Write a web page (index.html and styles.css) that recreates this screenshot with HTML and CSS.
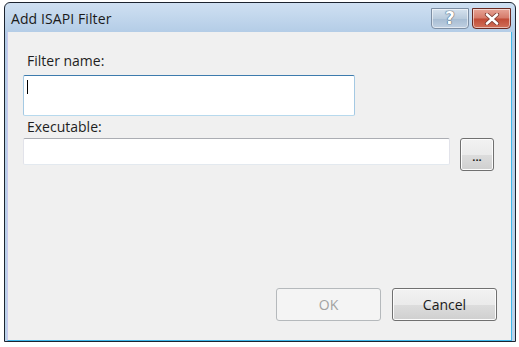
FILE: index.html
```html
<!DOCTYPE html>
<html lang="en">
<head>
    <meta charset="UTF-8">
    <title>Add ISAPI Filter</title>
    <link rel="stylesheet" href="styles.css">
</head>
<body>
    <div class="window">
        <div class="titlebar">
            <span class="title">Add ISAPI Filter</span>
            <div class="caption-buttons">
                <div class="cap-btn help">?</div>
                <div class="cap-btn close">
                    <svg width="16" height="12" viewBox="0 0 16 12">
                        <path d="M3 1.5 L13 10.5 M13 1.5 L3 10.5" stroke="#7a3a30" stroke-width="4.2" stroke-linecap="round"/>
                        <path d="M3 1.5 L13 10.5 M13 1.5 L3 10.5" stroke="#ffffff" stroke-width="2.6" stroke-linecap="round"/>
                    </svg>
                </div>
            </div>
        </div>
        <div class="content">
            <label class="field-label">Filter name:</label>
            <div class="textbox focused name-box"><span class="caret"></span></div>
            <label class="field-label exec-label">Executable:</label>
            <div class="exec-row">
                <div class="textbox exec-box"></div>
                <button class="button browse">...</button>
            </div>
            <div class="actions">
                <button class="button ok" disabled>OK</button>
                <button class="button cancel">Cancel</button>
            </div>
        </div>
    </div>
</body>
</html>
```

FILE: styles.css
```css
body {
    margin: 0;
    background-color: #ffffff;
    font-family: 'Open Sans', 'Noto Sans', sans-serif;
    font-size: 14px;
    color: #000;
}

.window {
    width: 512px;
    height: 340px;
    margin: 2px 0 0 4px;
    box-sizing: border-box;
    border: 1px solid #1c2430;
    border-radius: 6px 6px 0 0;
    background: linear-gradient(#cfe0f2, #b3cce6 30px, #bcd3ea);
    display: flex;
    flex-direction: column;
}

.titlebar {
    height: 29px;
    display: flex;
    align-items: flex-start;
    justify-content: space-between;
    padding-left: 6px;
}

.title {
    margin-top: 6px;
    font-size: 14px;
    letter-spacing: 0.1px;
    color: #1a1a1a;
}

.caption-buttons {
    display: flex;
    gap: 3px;
    margin-top: 5px;
    margin-right: 4px;
}

.cap-btn {
    height: 21px;
    box-sizing: border-box;
    border: 1px solid #7d8ea3;
    border-radius: 0 0 4px 4px;
    display: flex;
    align-items: center;
    justify-content: center;
    box-shadow: inset 0 0 0 1px rgba(255, 255, 255, 0.55);
}

.help {
    width: 38px;
    background: linear-gradient(#d6e2ee, #b9cbdc 50%, #a7bcd2 51%, #bfd0e2);
    color: #ffffff;
    font-family: 'DejaVu Sans', sans-serif;
    font-weight: bold;
    font-size: 17px;
    line-height: 1;
    text-shadow: 0 0 1px #4f6378, 0 0 1px #4f6378, 0 0 1px #4f6378;
}

.close {
    width: 39px;
    border-color: #6b2a22;
    background: linear-gradient(#e7a597, #d57a69 48%, #c14b36 52%, #d0705a);
}

.content {
    flex: 1;
    margin: 0 3px 0 2px;
    border-left: 1px solid #c9c9ee;
    border-bottom: 1px solid #3fb7ea;
    border-right: 1px solid #3fb7ea;
    background-color: #f0f0f0;
    display: flex;
    flex-direction: column;
    align-items: flex-start;
    padding: 19px 14px 19px 15px;
}

.field-label {
    line-height: 20px;
    margin-left: 4px;
    margin-bottom: 4px;
    color: #1e1e1e;
}

.exec-label {
    margin-bottom: 1px;
}

.textbox {
    box-sizing: border-box;
    background-color: #ffffff;
    border: 1px solid;
    border-color: #abadb3 #e2e3ea #e3e9ef #e2e3ea;
    border-radius: 2px;
}

.textbox.focused {
    border-color: #3d7bad #a4c9e3 #b7d9ed #a4c9e3;
}

.name-box {
    width: 332px;
    height: 41px;
    margin-bottom: 1px;
    padding: 4px 0 0 3px;
}

.caret {
    display: block;
    width: 1px;
    height: 14px;
    background-color: #000;
}

.exec-row {
    display: flex;
    gap: 10px;
    align-items: flex-start;
}

.exec-box {
    width: 427px;
    height: 27px;
}

.button {
    box-sizing: border-box;
    font-family: inherit;
    font-size: 14px;
    color: #1a1a1a;
    border: 1px solid #707070;
    border-radius: 3px;
    background: linear-gradient(#f2f2f2, #ebebeb 50%, #dddddd 51%, #cfcfcf);
    box-shadow: inset 0 0 0 1px #fcfcfc;
    padding: 0;
}

.browse {
    width: 34px;
    height: 33px;
    font-size: 11px;
    font-weight: bold;
    line-height: 1;
    padding-top: 4px;
}

.actions {
    margin-top: auto;
    align-self: flex-end;
    display: flex;
    gap: 11px;
}

.ok,
.cancel {
    width: 105px;
    height: 33px;
}

.ok {
    border-color: #b5b9bc;
    background: #f4f4f4;
    box-shadow: none;
    color: #a2a2a2;
}
```
